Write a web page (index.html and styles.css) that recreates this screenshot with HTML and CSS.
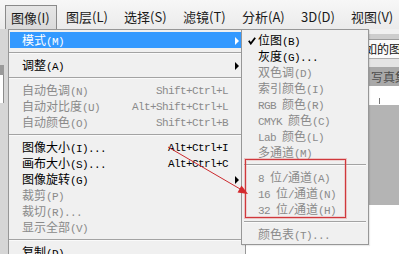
FILE: index.html
```html
<!DOCTYPE html>
<html lang="zh-CN">
<head>
<meta charset="utf-8">
<link rel="stylesheet" href="styles.css">
</head>
<body>
<div class="menubar">
  <div class="mi on w1">图像(I)</div>
  <div class="mi w2">图层(L)</div>
  <div class="mi w3">选择(S)</div>
  <div class="mi w3">滤镜(T)</div>
  <div class="mi w3">分析(A)</div>
  <div class="mi w4">3D(D)</div>
  <div class="mi">视图(V)</div>
</div>
<div class="work">
  <div class="side"><div class="side-dark"></div><div class="side-white"></div></div>
  <div class="doc">
    <div class="d1"></div>
    <div class="d2"></div>
    <div class="title">如的图像</div>
    <div class="d3"></div>
    <div class="tab">写真集</div>
    <div class="ruler"><div class="tick"></div></div>
    <div class="canvas"></div>
    <div class="paper"></div>
  </div>
</div>

<div class="menu main">
  <div class="row hl"><span>模式<span class="k">(M)</span></span><span></span><span class="arr"><svg width="5" height="8" viewBox="0 0 5 8"><polygon points="0,0 4,4 0,8" fill="#fff"/></svg></span></div>
  <div class="sep"></div>
  <div class="row"><span>调整<span class="k">(A)</span></span><span></span><span class="arr"><svg width="5" height="8" viewBox="0 0 5 8"><polygon points="0,0 4,4 0,8" fill="#000"/></svg></span></div>
  <div class="sep"></div>
  <div class="row dis"><span>自动色调<span class="k">(N)</span></span><span class="k">Shift+Ctrl+L</span><span></span></div>
  <div class="row dis"><span>自动对比度<span class="k">(U)</span></span><span class="k">Alt+Shift+Ctrl+L</span><span></span></div>
  <div class="row dis"><span>自动颜色<span class="k">(O)</span></span><span class="k">Shift+Ctrl+B</span><span></span></div>
  <div class="sep"></div>
  <div class="row"><span>图像大小<span class="k">(I)...</span></span><span class="k">Alt+Ctrl+I</span><span></span></div>
  <div class="row"><span>画布大小<span class="k">(S)...</span></span><span class="k">Alt+Ctrl+C</span><span></span></div>
  <div class="row"><span>图像旋转<span class="k">(G)</span></span><span></span><span class="arr"><svg width="5" height="8" viewBox="0 0 5 8"><polygon points="0,0 4,4 0,8" fill="#000"/></svg></span></div>
  <div class="row dis"><span>裁剪<span class="k">(P)</span></span><span></span><span></span></div>
  <div class="row dis"><span>裁切<span class="k">(R)...</span></span><span></span><span></span></div>
  <div class="row dis"><span>显示全部<span class="k">(V)</span></span><span></span><span></span></div>
  <div class="sep"></div>
  <div class="row"><span>复制<span class="k">(D)...</span></span><span></span><span></span></div>
</div>

<div class="menu sub">
  <div class="srow"><span class="chk"><svg width="8" height="8" viewBox="0 0 8 8"><polyline points="0.8,3.8 2.8,6.6 7.2,0.8" fill="none" stroke="#000" stroke-width="1.8"/></svg></span><span>位图<span class="k">(B)</span></span></div>
  <div class="srow"><span></span><span>灰度<span class="k">(G)...</span></span></div>
  <div class="srow dis"><span></span><span>双色调<span class="k">(D)</span></span></div>
  <div class="srow dis"><span></span><span>索引颜色<span class="k">(I)</span></span></div>
  <div class="srow dis"><span></span><span><span class="k">RGB </span>颜色<span class="k">(R)</span></span></div>
  <div class="srow dis"><span></span><span><span class="k">CMYK </span>颜色<span class="k">(C)</span></span></div>
  <div class="srow dis"><span></span><span><span class="k">Lab </span>颜色<span class="k">(L)</span></span></div>
  <div class="srow dis"><span></span><span>多通道<span class="k">(M)</span></span></div>
  <div class="sep s2"></div>
  <div class="srow dis"><span></span><span><span class="k">8 </span>位<span class="k">/</span>通道<span class="k">(A)</span></span></div>
  <div class="srow dis"><span></span><span><span class="k">16 </span>位<span class="k">/</span>通道<span class="k">(N)</span></span></div>
  <div class="srow dis"><span></span><span><span class="k">32 </span>位<span class="k">/</span>通道<span class="k">(H)</span></span></div>
  <div class="sep s2"></div>
  <div class="srow dis"><span></span><span>颜色表<span class="k">(T)...</span></span></div>
</div>

<div class="redbox"></div>
<svg class="annot" width="399" height="254" viewBox="0 0 399 254">
  <line x1="168" y1="147" x2="241" y2="189.5" stroke="#cc2a2e" stroke-width="1"/>
  <polygon points="248,194 237.5,192.5 241.5,185.5" fill="#d42a2e"/>
</svg>
</body>
</html>
```

FILE: styles.css
```css
html, body {
  margin: 0;
  padding: 0;
}
body {
  width: 399px;
  height: 254px;
  overflow: hidden;
  position: relative;
  background: #fff;
  font-family: "Noto Sans CJK SC", sans-serif;
  color: #000;
}

/* top menu bar */
.menubar {
  height: 29px;
  display: flex;
  align-items: flex-end;
  padding-left: 5px;
  box-sizing: border-box;
  background: linear-gradient(#f7f7f7, #ebebeb);
}
.mi {
  flex: none;
  height: 24px;
  line-height: 24px;
  padding-left: 6px;
  box-sizing: border-box;
  font-size: 13px;
  color: #1a1a1a;
  white-space: nowrap;
}
.mi.on {
  border: 1px solid #8a8a8a;
  border-bottom: 0;
  padding-left: 5px;
  margin-right: 3px;
  line-height: 23px;
  background: linear-gradient(#e6e6e6, #dadada);
}
.w1 { width: 52px; }
.w2 { width: 58px; }
.w3 { width: 59px; }
.w4 { width: 50px; }

/* background workspace */
.work {
  display: flex;
  height: 225px;
}
.side {
  width: 8px;
  flex: none;
  background: #d6d6d6;
  display: flex;
  flex-direction: column;
  padding-top: 36px;
  box-sizing: border-box;
}
.side-dark {
  width: 4px;
  height: 10px;
  background: #9a9a9a;
}
.side-white {
  width: 3px;
  height: 28px;
  background: #fff;
  border-right: 1px solid #8c8c8c;
}
.doc {
  flex: 1;
  display: flex;
  flex-direction: column;
  overflow: hidden;
}
.d1 { height: 5px; background: #f0f0f0; }
.d2 { height: 5px; background: #cdcdcd; border-bottom: 1px solid #9c9c9c; }
.title {
  height: 18px;
  line-height: 17px;
  background: #fbfbfb;
  font-size: 12px;
  padding-left: 357px;
  white-space: nowrap;
  overflow: hidden;
  color: #111;
}
.d3 { height: 8px; background: #e4e4e4; border-top: 1px solid #adadad; }
.tab {
  height: 19px;
  line-height: 19px;
  background: #a9a9a9;
  color: #4d4d4d;
  font-size: 12px;
  padding-left: 363px;
  white-space: nowrap;
  overflow: hidden;
}
.ruler {
  height: 19px;
  background: #fff;
  position: relative;
}
.tick {
  position: absolute;
  left: 371px;
  top: 12px;
  width: 1px;
  height: 6px;
  background: #777;
}
.canvas { height: 100px; background: #b4b4b4; }
.paper { flex: 1; background: #fff; }

/* menus */
.menu {
  position: absolute;
  top: 29px;
  box-sizing: border-box;
  background: #f0f0f0;
  border: 1px solid #979797;
  padding: 2px 1px;
  font-size: 12px;
  line-height: 16px;
}
.main {
  left: 8px;
  width: 238px;
  height: 225px;
  border-bottom: 0;
  overflow: hidden;
}
.sub {
  left: 241px;
  width: 128px;
  height: 216px;
  box-shadow: 1px 1px 1px rgba(0,0,0,0.08);
}
.row {
  display: grid;
  grid-template-columns: 1fr auto 16px;
  align-items: center;
  height: 16px;
  padding-left: 12px;
  white-space: nowrap;
}
.row.hl {
  background: #3399ff;
  color: #fff;
}
.dis { color: #8a8a8a; }
.arr {
  display: flex;
  align-items: center;
  padding-left: 7px;
}
.k {
  font-family: "Liberation Mono", monospace;
  font-size: 11px;
  letter-spacing: -0.6px;
}
.sep {
  height: 9px;
  margin: 0 -1px;
  box-sizing: border-box;
  padding-top: 4px;
}
.sep::before {
  content: "";
  display: block;
  height: 1px;
  background: #a3a3a3;
  border-bottom: 1px solid #fafafa;
}
.sep.s2 {
  margin: 0 1px;
}
.srow {
  display: grid;
  grid-template-columns: 15px 1fr;
  align-items: center;
  height: 16px;
  white-space: nowrap;
}
.chk {
  display: flex;
  align-items: center;
  padding-left: 5px;
}

/* annotations */
.redbox {
  position: absolute;
  left: 245px;
  top: 159px;
  width: 99px;
  height: 57px;
  border: 1px solid #d0383c;
  box-shadow: 0 0 0 1px rgba(225, 110, 110, 0.35), inset 0 0 0 1px rgba(225, 110, 110, 0.25);
}
.annot {
  position: absolute;
  left: 0;
  top: 0;
}
```
